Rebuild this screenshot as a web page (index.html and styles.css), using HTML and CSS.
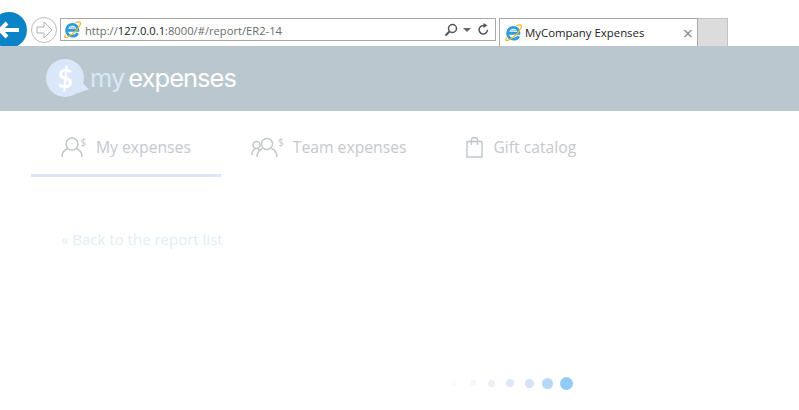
FILE: index.html
```html
<!DOCTYPE html>
<html lang="en">
<head>
<meta charset="utf-8">
<title>MyCompany Expenses</title>
<link rel="stylesheet" href="styles.css">
</head>
<body>
<svg class="defs" width="0" height="0" aria-hidden="true">
  <symbol id="ie" viewBox="0 0 18 18">
    <path d="M2.800 9.800h11.900c.2-3.800-2.400-6.300-5.700-6.300-3.600 0-6.300 2.900-6.300 6.400s2.700 6.200 6.300 6.200c2.500 0 4.500-1.200 5.400-3.300" fill="none" stroke="#2f9bd8" stroke-width="3"/>
    <path d="M6 6.800h6.500" stroke="#8ccbec" stroke-width="1.300"/>
    <path d="M1.800 14.400C-.2 17.400 1.200 18.600 4.500 16.700 9 14 14.800 8.300 16.900 4.200 18.200 1.400 16.700-.2 12.200 1.800" fill="none" stroke="#eeb92e" stroke-width="1.400"/>
  </symbol>
</svg>
<div class="toolbar">
  <div class="back">
    <svg width="22" height="18" viewBox="0 0 22 18"><path d="M10 2 3 9l7 7M4 9h18" fill="none" stroke="#fff" stroke-width="4"/></svg>
  </div>
  <div class="forward">
    <svg width="17" height="18" viewBox="0 0 17 18"><path d="M8 1l8 8-8 8v-5H1V6h7z" fill="none" stroke="#b0b0b0"/></svg>
  </div>
  <div class="address">
    <svg class="ie-icon" width="17" height="17"><use href="#ie"/></svg>
    <span class="url">http://<b>127.0.0.1</b>:8000/#/report/ER2-14</span>
    <svg class="tool" width="14" height="14" viewBox="0 0 14 14"><circle cx="8.500" cy="5.500" r="4" fill="none" stroke="#555" stroke-width="1.500"/><path d="M5.500 8.500 1.500 12.500" stroke="#555" stroke-width="2"/></svg>
    <svg class="tool caret" width="8" height="4" viewBox="0 0 8 4"><path d="M0 0h8L4 4z" fill="#666"/></svg>
    <svg class="tool" width="13" height="13" viewBox="0 0 13 13"><path d="M10.500 6.800A4.200 4.200 0 1 1 7.500 2.700" fill="none" stroke="#555" stroke-width="1.500"/><path d="M6.500 0v5l4-2.500z" fill="#555"/></svg>
  </div>
  <div class="tab">
    <svg class="ie-icon" width="17" height="17"><use href="#ie"/></svg>
    <span class="tab-title">MyCompany Expenses</span>
    <span class="tab-close">×</span>
  </div>
  <div class="new-tab"></div>
</div>

<header class="brand">
  <div class="logo-mark">
    <span class="logo-dollar">$</span>
  </div>
  <div class="logo-text"><span class="logo-my">my</span><span class="logo-exp">expenses</span></div>
</header>

<nav class="tabs">
  <a class="nav-item active">
    <svg class="nav-icon" width="25" height="24" viewBox="0 0 25 24"><g fill="none" stroke="#c1c6cb" stroke-width="1.400"><circle cx="11" cy="9" r="6"/><path d="M1 22c0-5 3-7.500 6-8.500M21 22c0-5-3-7.500-6-8.500"/></g><text x="19.500" y="11" class="nav-sign">$</text></svg>
    <span>My expenses</span>
  </a>
  <a class="nav-item">
    <svg class="nav-icon" width="32" height="24" viewBox="0 0 32 24"><g fill="none" stroke="#c1c6cb" stroke-width="1.400"><circle cx="5.500" cy="10" r="3.500"/><path d="M1 20c0-3 1-5 3-6M7 14c1 .3 1.800.8 2.500 1.500"/><circle cx="16" cy="9" r="5.500"/><path d="M6 22c0-5 3-7.500 5.500-8.500M26 22c0-5-3-7.500-5.500-8.500"/></g><text x="27" y="11" class="nav-sign">$</text></svg>
    <span>Team expenses</span>
  </a>
  <a class="nav-item">
    <svg class="nav-icon" width="17" height="24" viewBox="0 0 17 24"><g fill="none" stroke="#c1c6cb" stroke-width="1.400"><path d="M1 6.500h15v15.500H1z"/><path d="M5.500 10V5c0-1.500 1.200-2.500 3-2.500s3 1 3 2.500v5"/></g></svg>
    <span>Gift catalog</span>
  </a>
</nav>

<main class="content">
  <a class="back-link">« Back to the report list</a>
  <div class="dots">
    <span class="dot d1"></span>
    <span class="dot d2"></span>
    <span class="dot d3"></span>
    <span class="dot d4"></span>
    <span class="dot d5"></span>
    <span class="dot d6"></span>
    <span class="dot d7"></span>
  </div>
</main>
</body>
</html>
```

FILE: styles.css
```css
* { box-sizing: border-box; }
html, body { margin: 0; padding: 0; }
body {
  width: 799px;
  height: 410px;
  overflow: hidden;
  background: #fff;
  font-family: "Open Sans", sans-serif;
}
.defs { display: block; height: 0; }

.toolbar {
  height: 46px;
  display: flex;
  align-items: flex-start;
  overflow: hidden;
  background: #fff;
}
.back {
  flex: none;
  width: 36px;
  height: 36px;
  margin: 12px 0 0 -9px;
  border-radius: 50%;
  background: #0a84c6;
  display: flex;
  align-items: center;
  justify-content: flex-end;
  padding-right: 8px;
}
.forward {
  flex: none;
  width: 26px;
  height: 26px;
  margin: 17px 0 0 4px;
  border: 1px solid #bdbdbd;
  border-radius: 50%;
  display: flex;
  align-items: center;
  justify-content: center;
}
.address {
  flex: none;
  width: 436px;
  height: 23px;
  margin: 18px 0 0 3px;
  border: 1px solid #a9a9a9;
  display: flex;
  align-items: center;
  padding: 0 5px 0 3px;
}
.ie-icon { flex: none; }
.url {
  flex: 1;
  margin-left: 4px;
  padding-top: 1px;
  font-size: 11.2px;
  color: #6b6b6b;
  white-space: nowrap;
}
.url b { font-weight: 400; color: #1a1a1a; }
.tool { flex: none; margin-left: 5px; }
.caret { margin-left: 5px; margin-right: 1px; }
.tab {
  flex: none;
  width: 199px;
  height: 28px;
  margin: 18px 0 0 3px;
  border: 1px solid #a9a9a9;
  border-bottom: 0;
  display: flex;
  align-items: center;
  padding: 0 4px 0 5px;
}
.tab-title {
  flex: 1;
  margin-left: 3px;
  font-size: 11.4px;
  color: #1c1c1c;
  white-space: nowrap;
}
.tab-close {
  font-size: 18px;
  line-height: 18px;
  color: #8a8a8a;
}
.new-tab {
  flex: none;
  width: 30px;
  height: 28px;
  margin-top: 18px;
  background: #dcdcdc;
  border: 1px solid #c2c2c2;
  border-left: 0;
  border-bottom: 0;
}

.brand {
  height: 65px;
  background: #bac7ce;
  display: flex;
  align-items: center;
  padding-left: 46px;
}
.logo-mark {
  position: relative;
  flex: none;
  width: 38px;
  height: 38px;
  margin-top: -2px;
  border-radius: 50%;
  background: #d9e7f8;
  display: flex;
  align-items: center;
  justify-content: center;
}
.logo-mark::after {
  content: "";
  position: absolute;
  right: -5px;
  bottom: 3px;
  width: 12px;
  height: 14px;
  background: #d9e7f8;
  clip-path: polygon(20% 0, 100% 70%, 0 100%);
}
.logo-dollar {
  position: relative;
  z-index: 1;
  font-family: "Lato", sans-serif;
  font-weight: 700;
  font-size: 27px;
  line-height: 1;
  color: #fff;
}
.logo-text {
  margin-left: 6px;
  margin-bottom: 2px;
  font-family: "Inter", sans-serif;
  font-weight: 400;
  font-size: 25.5px;
  line-height: 1;
  letter-spacing: -1px;
  white-space: nowrap;
}
.logo-my { color: #d9e7f8; margin-right: 4px; }
.logo-exp { color: #fff; }

.tabs {
  display: flex;
  height: 66px;
  padding-left: 31px;
}
.nav-item {
  display: flex;
  align-items: center;
  gap: 10px;
  padding: 9px 30px 0;
  height: 66px;
  font-size: 15.7px;
  color: #c3c9cf;
  border-bottom: 3px solid transparent;
  white-space: nowrap;
}
.nav-item.active { border-bottom-color: #dce7f7; }
.nav-icon { flex: none; overflow: visible; }
.nav-sign {
  font-family: "Open Sans", sans-serif;
  font-size: 10px;
  fill: #c1c6cb;
}

.content {
  padding-top: 51px;
}
.back-link {
  display: block;
  margin-left: 61px;
  font-size: 15px;
  line-height: 22px;
  color: #e3edf6;
}
.dots {
  display: grid;
  grid-template-columns: repeat(7, 18.7px);
  justify-items: center;
  align-items: center;
  width: 131px;
  height: 16px;
  margin: 125px 0 0 445px;
}
.dot {
  border-radius: 50%;
}
.d1 { width: 6px; height: 6px; background: #f8fafc; }
.d2 { width: 6px; height: 6px; background: #f3f6fa; }
.d3 { width: 7px; height: 7px; background: #eaeff6; }
.d4 { width: 8px; height: 8px; background: #dfe8f6; }
.d5 { width: 9px; height: 9px; background: #d3e2f6; }
.d6 { width: 11px; height: 11px; background: #b6d8f6; }
.d7 { width: 13px; height: 13px; background: #93cbf7; }
```
